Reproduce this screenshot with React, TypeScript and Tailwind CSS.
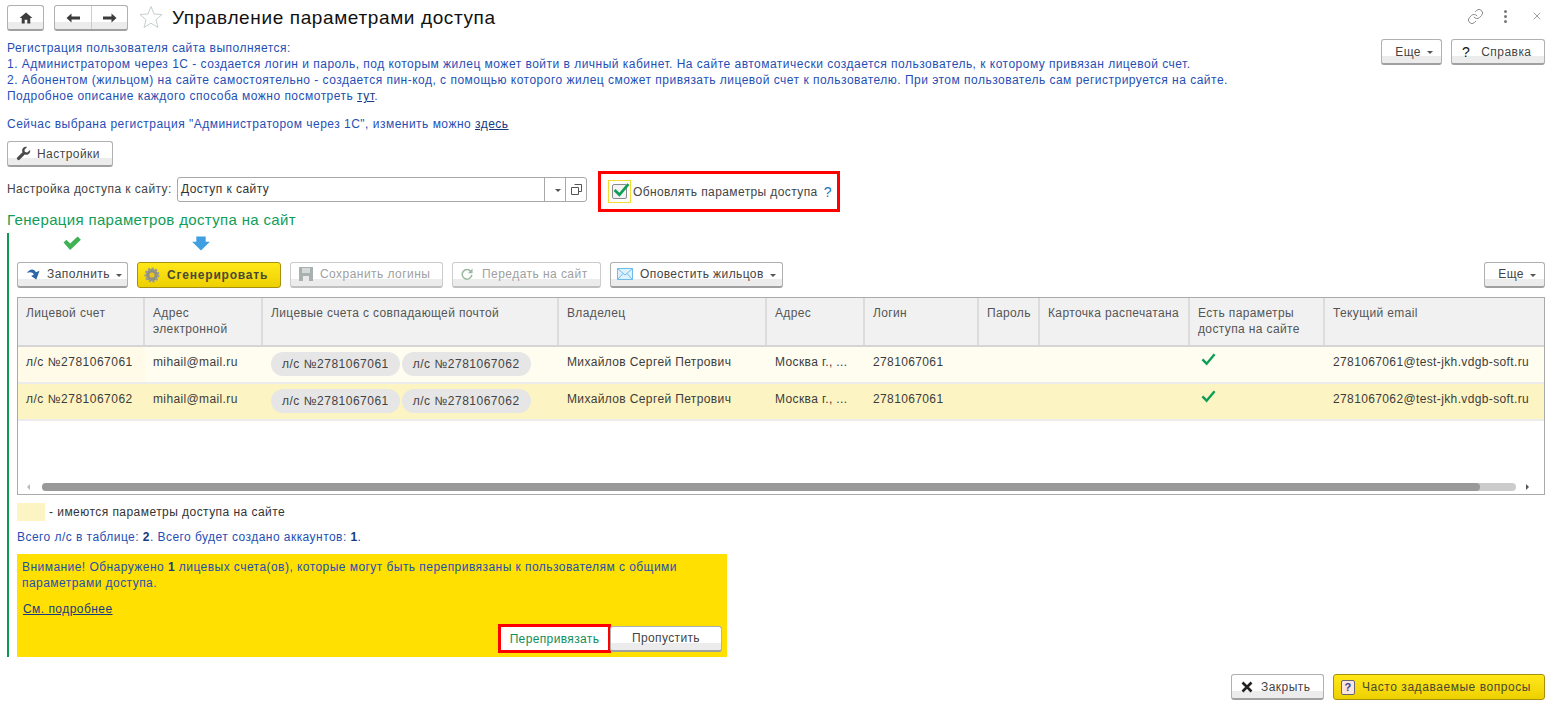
import type { ReactNode } from 'react';
import { Link, X } from 'lucide-react';

const COLUMNS = 'grid grid-cols-[127px_118px_296px_208px_98px_114px_61px_150px_135px_1fr]';

const HEADERS = [
  'Лицевой счет',
  'Адрес электронной',
  'Лицевые счета с совпадающей почтой',
  'Владелец',
  'Адрес',
  'Логин',
  'Пароль',
  'Карточка распечатана',
  'Есть параметры доступа на сайте',
  'Текущий email',
];

const ROWS = [
  { account: 'л/с №2781067061', email: '2781067061@test-jkh.vdgb-soft.ru', bg: 'bg-[#fffdf0]', first: 'bg-[#fffbe8]' },
  { account: 'л/с №2781067062', email: '2781067062@test-jkh.vdgb-soft.ru', bg: 'bg-[#fdf4c3]', first: 'bg-[#fdf4c3]' },
];

function Btn({ children, className = '' }: { children: ReactNode; className?: string }) {
  return (
    <div className={`h-[26px] flex items-center rounded-[3px] border border-[#b0b0b0] border-b-2 border-b-[#a0a0a0] bg-linear-to-b from-white from-70% to-[#ececec] to-70% text-[#444] shrink-0 ${className}`}>
      {children}
    </div>
  );
}

function YellowBtn({ children, className = '' }: { children: ReactNode; className?: string }) {
  return (
    <div className={`h-[26px] flex items-center rounded-[3px] border border-[#a8900f] bg-linear-to-b from-[#ffe81a] to-[#eed000] text-[#4a4a30] shrink-0 ${className}`}>
      {children}
    </div>
  );
}

function Caret() {
  return <span className="inline-block border-x-[3px] border-x-transparent border-t-[3px] border-t-[#555] ml-[6px] mt-[2px]" />;
}

function Check({ className = '' }: { className?: string }) {
  return (
    <svg viewBox="0 0 16 14" className={className}>
      <path d="M1.5 7.5 L6 12 L14.5 2" fill="none" stroke="#0f9d58" strokeWidth="2.6" />
    </svg>
  );
}

function Chip({ children }: { children: ReactNode }) {
  return <span className="h-[24px] px-[11px] flex items-center rounded-full bg-[#e6e6e6] text-[#444] whitespace-nowrap">{children}</span>;
}

export default function App() {
  return (
    <div className="w-[1554px] h-[707px] overflow-hidden bg-white text-[12px] leading-[16px] tracking-[0.45px] text-[#444] flex flex-col font-['Liberation_Sans',Arial,sans-serif]">
      {/* Шапка */}
      <div className="h-[36px] pl-[7px] pr-[11px] pt-[5px] flex items-start">
        <Btn className="w-[37px] justify-center h-[24px]">
          <svg viewBox="0 0 16 14" className="w-[14px] h-[12px]">
            <path d="M8 0.5 L0.5 7 H3 V13.5 H6.5 V9 H9.5 V13.5 H13 V7 H15.5 Z" fill="#3c3c3c" />
          </svg>
        </Btn>
        <Btn className="ml-[10px] w-[74px] h-[24px]">
          <span className="w-[37px] h-full flex items-center justify-center border-r border-[#ccc]">
            <svg viewBox="0 0 14 10" className="w-[14px] h-[10px]"><path d="M0.5 5 L5.5 0.5 V3.5 H14 V6.5 H5.5 V9.5 Z" fill="#3c3c3c" /></svg>
          </span>
          <span className="flex-1 flex items-center justify-center">
            <svg viewBox="0 0 14 10" className="w-[14px] h-[10px]"><path d="M13.5 5 L8.5 0.5 V3.5 H0 V6.5 H8.5 V9.5 Z" fill="#3c3c3c" /></svg>
          </span>
        </Btn>
        <svg viewBox="0 0 24 24" className="ml-[11px] w-[24px] h-[24px]">
          <path d="M12 1.5 L15 9 L23 9.5 L17 14.7 L19 22.5 L12 18.2 L5 22.5 L7 14.7 L1 9.5 L9 9 Z" fill="#fff" stroke="#c5d0cc" strokeWidth="1" />
        </svg>
        <h1 className="ml-[9px] text-[19px] leading-[26px] tracking-[0.62px] text-[#111]">Управление параметрами доступа</h1>
        <div className="ml-auto flex items-center h-[22px] text-[#777]">
          <Link className="w-[17px] h-[17px]" strokeWidth={1.2} />
          <span className="ml-[20px] flex flex-col gap-[2px]">
            <i className="w-[3px] h-[3px] rounded-full bg-[#777]" />
            <i className="w-[3px] h-[3px] rounded-full bg-[#777]" />
            <i className="w-[3px] h-[3px] rounded-full bg-[#777]" />
          </span>
          <X className="ml-[24px] w-[12px] h-[12px]" strokeWidth={1.4} />
        </div>
      </div>

      {/* Описание */}
      <div className="h-[105px] pl-[7px] pr-[9px] flex justify-between items-start">
        <div className="text-[#1f4fb4] pt-[4px] tracking-[0.485px]">
          <p>Регистрация пользователя сайта выполняется:</p>
          <p>1. Администратором через 1С - создается логин и пароль, под которым жилец может войти в личный кабинет. На сайте автоматически создается пользователь, к которому привязан лицевой счет.</p>
          <p>2. Абонентом (жильцом) на сайте самостоятельно - создается пин-код, с помощью которого жилец сможет привязать лицевой счет к пользователю. При этом пользователь сам регистрируется на сайте.</p>
          <p>Подробное описание каждого способа можно посмотреть <u className="text-[#173a80]">тут</u>.</p>
          <p className="mt-[12px]">Сейчас выбрана регистрация "Администратором через 1С", изменить можно <u className="text-[#173a80]">здесь</u></p>
        </div>
        <div className="flex gap-[9px] pt-[3px]">
          <Btn className="w-[61px] justify-end pr-[8px]">Еще<Caret /></Btn>
          <Btn className="w-[94px]"><b className="ml-[10px] mr-[11px] text-[14px] font-normal text-[#111]">?</b>Справка</Btn>
        </div>
      </div>

      {/* Настройки */}
      <div className="pl-[7px]">
        <Btn className="w-[106px]">
          <svg viewBox="0 0 16 16" className="ml-[8px] w-[15px] h-[15px]">
            <path d="M15 4.2 L12 7 L9.5 6.5 L9 4 L11.8 1 C9.5 0.2 6.8 1.5 6.5 4.5 C6.4 5.4 6.6 6 6.9 6.6 L1 12.5 C0.2 13.5 2.5 15.8 3.5 15 L9.4 9.1 C12.5 10.2 15.8 7.8 15 4.2 Z" fill="#4a4a4a" />
          </svg>
          <span className="ml-[6px]">Настройки</span>
        </Btn>
      </div>

      <div className="h-[45px] pl-[7px] mt-[2px] flex items-center relative">
        <span className="w-[170px] shrink-0 -mt-[5px]">Настройка доступа к сайту:</span>
        <div className="w-[410px] h-[25px] -mt-[5px] flex items-center rounded-[3px] border border-[#a8a8a8] text-[#333]">
          <span className="flex-1 pl-[3px]">Доступ к сайту</span>
          <span className="w-[21px] h-full border-l border-[#a8a8a8] flex items-center justify-center"><Caret /></span>
          <span className="w-[21px] h-full border-l border-[#a8a8a8] flex items-center justify-center">
            <svg viewBox="0 0 11 11" className="w-[11px] h-[11px]"><path d="M3.5 0.5 H10.5 V7.5 H7.5 M0.5 3.5 H7.5 V10.5 H0.5 Z" fill="none" stroke="#555" /></svg>
          </span>
        </div>
        <div className="ml-[11px] w-[242px] h-[41px] border-[3px] border-[#f00] flex items-center pl-[7px]">
          <span className="w-[23px] h-[23px] border border-[#f5dc30] flex items-center justify-center relative shrink-0">
            <span className="w-[15px] h-[15px] border border-[#8a8a8a] rounded-[2px] bg-[#f3f3f3]" />
            <Check className="absolute left-[4px] top-[1px] w-[17px] h-[15px]" />
          </span>
          <span className="ml-[2px] whitespace-nowrap tracking-[0.4px]">Обновлять параметры доступа</span>
          <span className="ml-[6px] text-[14px] text-[#1976c0]">?</span>
        </div>
      </div>

      <h2 className="ml-[7px] h-[23px] text-[15px] leading-[20px] tracking-[0.34px] text-[#0f9d58] -mt-[4px]">Генерация параметров доступа на сайт</h2>

      {/* Группа */}
      <div className="ml-[7px] mr-[9px] h-[424px] border-l-2 border-[#0a9b4f] pl-[8px] flex flex-col">
        <div className="h-[29px] relative">
          <svg viewBox="0 0 20 16" className="absolute left-[45px] top-[3px] w-[20px] h-[15px]">
            <path d="M1 7 L4 4 L8 8 L16 0.5 L19.5 4 L8 15 Z" fill="#3fb254" />
          </svg>
          <svg viewBox="0 0 20 16" className="absolute left-[174px] top-[3px] w-[20px] h-[15px]">
            <path d="M5 0.5 H15 V6 H19.5 L10 15.5 L0.5 6 H5 Z" fill="#3f9fe0" />
          </svg>
        </div>

        {/* Панель кнопок */}
        <div className="flex items-center">
          <Btn className="w-[111px]">
            <svg viewBox="0 0 16 14" className="ml-[8px] w-[15px] h-[13px]">
              <path d="M1 5.5 C3.5 0.5 9 0.5 10.5 4.5 L14.5 3 L11 12.5 L5.5 8.5 L8.5 7 C7 4.5 4 4 1 5.5 Z" fill="#2a66a8" />
            </svg>
            <span className="ml-[6px]">Заполнить</span><Caret />
          </Btn>
          <YellowBtn className="ml-[9px] w-[144px] font-bold tracking-[0.8px]">
            <svg viewBox="0 0 16 16" className="ml-[6px] w-[16px] h-[16px]">
              <circle cx="8" cy="8" r="6" fill="#8f8f80" stroke="#9a9a90" strokeWidth="3" strokeDasharray="2 1.4" />
              <circle cx="8" cy="8" r="2.6" fill="#e9c520" />
            </svg>
            <span className="ml-[7px]">Сгенерировать</span>
          </YellowBtn>
          <Btn className="ml-[9px] w-[153px] text-[#a0a0a0] border-[#ccc] border-b-[#c0c0c0]">
            <svg viewBox="0 0 14 14" className="ml-[8px] w-[14px] h-[14px]">
              <path d="M0 0 H14 V14 H0 Z" fill="#a9b0b0" />
              <path d="M3 1 H11 V6 H3 Z" fill="#d5d8d8" />
              <path d="M4 9 H10 V14 H4 Z" fill="#e8eaea" />
            </svg>
            <span className="ml-[7px]">Сохранить логины</span>
          </Btn>
          <Btn className="ml-[9px] w-[149px] text-[#a0a0a0] border-[#ccc] border-b-[#c0c0c0]">
            <svg viewBox="0 0 14 14" className="ml-[8px] w-[12px] h-[12px]">
              <path d="M11.5 4 A5.6 5.6 0 1 0 12.6 8" fill="none" stroke="#9cb8a0" strokeWidth="1.8" />
              <path d="M13.5 0.5 V6 H8 Z" fill="#9cb8a0" />
            </svg>
            <span className="ml-[9px]">Передать на сайт</span>
          </Btn>
          <Btn className="ml-[9px] w-[173px]">
            <svg viewBox="0 0 16 12" className="ml-[6px] w-[16px] h-[12px]">
              <path d="M0.5 0.5 H15.5 V11.5 H0.5 Z" fill="#dff1fc" stroke="#6dbcec" />
              <path d="M0.5 0.5 L8 7 L15.5 0.5 M0.5 11.5 L6 5.5 M15.5 11.5 L10 5.5" fill="none" stroke="#6dbcec" />
            </svg>
            <span className="ml-[7px] whitespace-nowrap tracking-[0.4px]">Оповестить жильцов</span><Caret />
          </Btn>
          <Btn className="ml-auto w-[61px] justify-end pr-[8px]">Еще<Caret /></Btn>
        </div>

        {/* Таблица */}
        <div className="mt-[9px] h-[199px] border border-[#aaa] flex flex-col relative tracking-[0.37px] text-[#3c3c3c]">
          <div className={`${COLUMNS} h-[49px] bg-[#f1f1f1] border-b-2 border-[#d5d5d5]`}>
            {HEADERS.map((h) => (
              <div key={h} className="pl-[8px] pr-[4px] pt-[7px] border-r-2 border-[#dcdcdc] last:border-r-0 text-[#555]">{h}</div>
            ))}
          </div>
          {ROWS.map((r) => (
            <div key={r.account} className={`${COLUMNS} h-[37px] border-b-2 border-[#ececec] ${r.bg}`}>
              <div className={`pl-[8px] pt-[7px] whitespace-nowrap tracking-[0.5px] ${r.first}`}>{r.account}</div>
              <div className="pl-[8px] pt-[7px]">mihail@mail.ru</div>
              <div className="pl-[8px] pt-[5px] flex gap-[2px] items-start tracking-[0.5px]"><Chip>л/с №2781067061</Chip><Chip>л/с №2781067062</Chip></div>
              <div className="pl-[8px] pt-[7px] whitespace-nowrap">Михайлов Сергей Петрович</div>
              <div className="pl-[8px] pt-[7px] whitespace-nowrap">Москва г., ...</div>
              <div className="pl-[8px] pt-[7px]">2781067061</div>
              <div />
              <div />
              <div className="pl-[11px] pt-[5px]"><Check className="w-[15px] h-[14px]" /></div>
              <div className="pl-[8px] pt-[7px] whitespace-nowrap">{r.email}</div>
            </div>
          ))}
          {/* Полоса прокрутки */}
          <div className="absolute left-0 right-0 bottom-[3px] h-[8px] flex items-center">
            <span className="ml-[9px] border-y-[3px] border-y-transparent border-r-[3px] border-r-[#bbb]" />
            <div className="ml-[12px] w-[1474px] h-[8px] rounded-full bg-[#ccc]">
              <div className="w-[1438px] h-full rounded-full bg-[#999]" />
            </div>
            <span className="ml-[10px] border-y-[3px] border-y-transparent border-l-[3px] border-l-[#555]" />
          </div>
        </div>

        <div className="mt-[8px] flex items-center h-[18px]">
          <span className="w-[28px] h-[18px] bg-[#fdf4c3]" />
          <span className="ml-[4px] text-[#333]">- имеются параметры доступа на сайте</span>
        </div>
        <p className="mt-[8px] text-[#1f4fb4]">Всего л/с в таблице: <b className="text-[#173a80]">2</b>. Всего будет создано аккаунтов: <b className="text-[#173a80]">1</b>.</p>

        {/* Предупреждение */}
        <div className="mt-[9px] w-[710px] h-[103px] bg-[#ffe000] pl-[5px] pr-[5px] pt-[5px] flex flex-col text-[#1f4fb4]">
          <p>Внимание! Обнаружено <b className="text-[#173a80]">1</b> лицевых счета(ов), которые могут быть перепривязаны к пользователям с общими параметрами доступа.</p>
          <u className="mt-[10px] ml-[1px] text-[#173a80]">См. подробнее</u>
          <div className="mt-auto mb-[4px] flex justify-end items-center">
            <div className="w-[113px] h-[29px] border-[3px] border-[#f00] bg-white flex items-center justify-center text-[#0f8f5a] whitespace-nowrap tracking-[0.37px]">Перепривязать</div>
            <Btn className="w-[112px] h-[25px] justify-center -ml-[1px] tracking-[0.37px]">Пропустить</Btn>
          </div>
        </div>
      </div>

      {/* Нижняя панель */}
      <div className="mt-[17px] pr-[9px] flex justify-end gap-[9px]">
        <Btn className="w-[93px]">
          <svg viewBox="0 0 12 12" className="ml-[9px] w-[12px] h-[12px]"><path d="M1.5 1.5 L10.5 10.5 M10.5 1.5 L1.5 10.5" stroke="#222" strokeWidth="2.6" /></svg>
          <span className="ml-[8px]">Закрыть</span>
        </Btn>
        <YellowBtn className="w-[212px]">
          <span className="ml-[7px] w-[14px] h-[15px] rounded-[2px] border border-[#667] bg-[#fde4dc] flex items-center justify-center text-[11px] font-bold text-[#3040a0]">?</span>
          <span className="ml-[7px] whitespace-nowrap tracking-[0.55px]">Часто задаваемые вопросы</span>
        </YellowBtn>
      </div>
    </div>
  );
}
